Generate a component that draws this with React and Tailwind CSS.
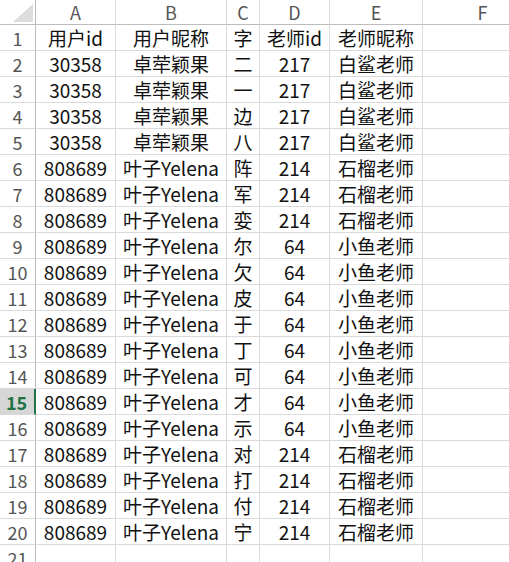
import React from "react";

const rows = [
  ["用户id", "用户昵称", "字", "老师id", "老师昵称"],
  ["30358", "卓荦颖果", "二", "217", "白鲨老师"],
  ["30358", "卓荦颖果", "一", "217", "白鲨老师"],
  ["30358", "卓荦颖果", "边", "217", "白鲨老师"],
  ["30358", "卓荦颖果", "八", "217", "白鲨老师"],
  ["808689", "叶子Yelena", "阵", "214", "石榴老师"],
  ["808689", "叶子Yelena", "军", "214", "石榴老师"],
  ["808689", "叶子Yelena", "娈", "214", "石榴老师"],
  ["808689", "叶子Yelena", "尔", "64", "小鱼老师"],
  ["808689", "叶子Yelena", "欠", "64", "小鱼老师"],
  ["808689", "叶子Yelena", "皮", "64", "小鱼老师"],
  ["808689", "叶子Yelena", "于", "64", "小鱼老师"],
  ["808689", "叶子Yelena", "丁", "64", "小鱼老师"],
  ["808689", "叶子Yelena", "可", "64", "小鱼老师"],
  ["808689", "叶子Yelena", "才", "64", "小鱼老师"],
  ["808689", "叶子Yelena", "示", "64", "小鱼老师"],
  ["808689", "叶子Yelena", "对", "214", "石榴老师"],
  ["808689", "叶子Yelena", "打", "214", "石榴老师"],
  ["808689", "叶子Yelena", "付", "214", "石榴老师"],
  ["808689", "叶子Yelena", "宁", "214", "石榴老师"],
  ["", "", "", "", ""],
];

const cols = ["A", "B", "C", "D", "E", "F"];
const font = { fontFamily: '"Noto Sans CJK SC", "Noto Sans", sans-serif' };

export default function App() {
  return (
    <div className="w-[509px] h-[562px] overflow-hidden bg-white" style={font}>
      <div className="grid grid-cols-[36px_80px_111px_33px_70px_93px_120px] auto-rows-[26px] grid-rows-[25px]">
        <div className="relative border-r border-b border-[#bdbdbd] bg-white">
          <svg className="absolute right-[2px] bottom-[2px]" width="20" height="18" viewBox="0 0 20 18">
            <polygon points="20,0 20,18 0,18" fill="#dcdcdc" />
          </svg>
        </div>
        {cols.map((c) => (
          <div
            key={c}
            className="flex items-center justify-center border-r border-b border-[#bdbdbd] border-r-[#dadada] text-[18px] leading-none text-[#555]"
          >
            {c}
          </div>
        ))}
        {rows.map((r, i) => {
          const n = i + 1;
          const active = n === 15;
          return (
            <React.Fragment key={n}>
              <div
                className={
                  active
                    ? "flex items-center justify-center border-r-2 border-b border-r-[#217346] border-b-[#dadada] bg-[#d6d6d6] text-[18px] leading-none font-bold text-[#217346] pr-[1px]"
                    : "flex items-center justify-center border-r border-b border-r-[#bdbdbd] border-b-[#dadada] text-[18px] leading-none text-[#555]"
                }
              >
                {n}
              </div>
              {r.map((v, j) => (
                <div
                  key={j}
                  className="flex items-center justify-center border-r border-b border-[#dadada] text-[19px] leading-none text-[#111] whitespace-nowrap"
                >
                  {v}
                </div>
              ))}
              <div className="border-r border-b border-[#dadada]" />
            </React.Fragment>
          );
        })}
      </div>
    </div>
  );
}
